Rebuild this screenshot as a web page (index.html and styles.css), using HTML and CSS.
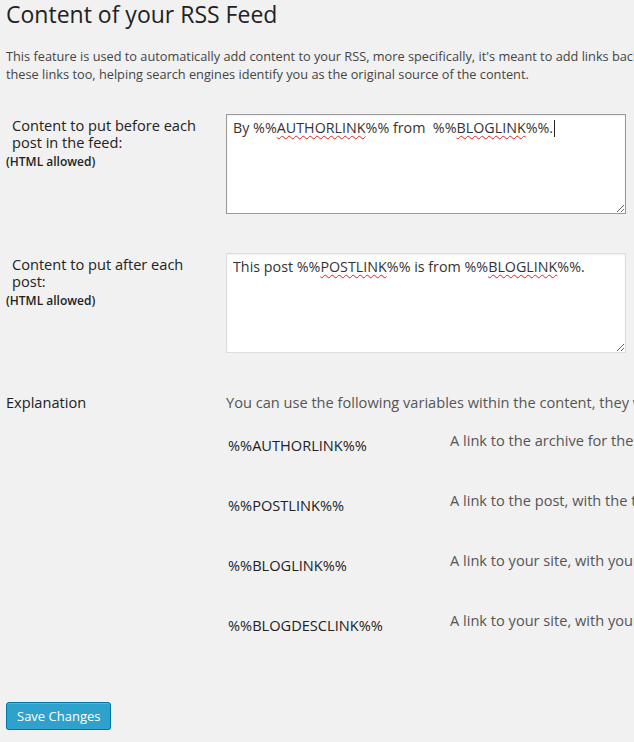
FILE: index.html
```html
<!DOCTYPE html>
<html lang="en">

<head>
    <meta charset="UTF-8">
    <meta name="viewport" content="width=device-width, initial-scale=1.0">
    <title>Content of your RSS Feed</title>
    <link rel="stylesheet" href="styles.css">
</head>

<body>
    <div class="wrap">
        <h2>Content of your RSS Feed</h2>
        <p class="intro">This feature is used to automatically add content to your RSS, more specifically, it's meant to add links back to your blog and your blog posts, so dumb scrapers will automatically add<br>these links too, helping search engines identify you as the original source of the content.</p>

        <form id="rssForm">
            <div class="form-row">
                <div class="label-cell">
                    <label for="rssbefore">Content to put before each post in the feed:</label>
                    <small>(HTML allowed)</small>
                </div>
                <div class="textbox focused" id="rssbefore" contenteditable="true" spellcheck="true">By %%<span class="typo">AUTHORLINK</span>%% from &nbsp;%%<span class="typo">BLOGLINK</span>%%.<span class="caret"></span></div>
            </div>

            <div class="form-row">
                <div class="label-cell">
                    <label for="rssafter">Content to put after each post:</label>
                    <small>(HTML allowed)</small>
                </div>
                <div class="textbox" id="rssafter" contenteditable="true" spellcheck="true">This post %%<span class="typo">POSTLINK</span>%% is from %%<span class="typo">BLOGLINK</span>%%.</div>
            </div>

            <div class="form-row explanation">
                <div class="label-cell">
                    <span class="plain-label">Explanation</span>
                </div>
                <div class="explain-cell">
                    <p>You can use the following variables within the content, they will automatically be replaced by the value below.</p>
                    <div class="vars">
                        <div class="var-row">
                            <span class="var-name">%%AUTHORLINK%%</span>
                            <span class="var-desc">A link to the archive for the post author, with the authors name as anchor text.</span>
                        </div>
                        <div class="var-row">
                            <span class="var-name">%%POSTLINK%%</span>
                            <span class="var-desc">A link to the post, with the title as anchor text.</span>
                        </div>
                        <div class="var-row">
                            <span class="var-name">%%BLOGLINK%%</span>
                            <span class="var-desc">A link to your site, with your site's name as anchor text.</span>
                        </div>
                        <div class="var-row">
                            <span class="var-name">%%BLOGDESCLINK%%</span>
                            <span class="var-desc">A link to your site, with your site's name and description as anchor text.</span>
                        </div>
                    </div>
                </div>
            </div>

            <button type="submit" class="button-primary">Save Changes</button>
        </form>
    </div>
</body>

</html>
```

FILE: styles.css
```css
:root {
    --bg: #f1f1f1;
    --text: #444444;
    --heading: #222222;
    --box-border: #dddddd;
    --box-focus: #999999;
    --primary: #2ea2cc;
    --primary-border: #0074a2;
}

html,
body {
    margin: 0;
    padding: 0;
    overflow: hidden;
    background-color: var(--bg);
}

body {
    font-family: "Open Sans", sans-serif;
    font-size: 13px;
    color: var(--text);
}

.wrap {
    width: 1000px;
    padding-left: 6px;
}

h2 {
    margin: 0;
    font-size: 23px;
    font-weight: 400;
    line-height: 29px;
    color: var(--heading);
}

.intro {
    margin: 18px 0 0;
    font-size: 12.75px;
    line-height: 18px;
    white-space: nowrap;
}

#rssForm {
    margin-top: 31px;
}

.form-row {
    display: grid;
    grid-template-columns: 220px 400px;
    margin-bottom: 39px;
}

.label-cell label {
    display: block;
    width: 194px;
    padding: 3px 0 0 6px;
    font-size: 14.6px;
    line-height: 17px;
    color: var(--heading);
}

.label-cell small {
    display: block;
    margin-top: 3px;
    font-size: 12px;
    font-weight: 600;
    line-height: 16px;
    color: var(--heading);
}

.textbox {
    box-sizing: border-box;
    height: 100px;
    padding: 3px 6px;
    background-color: #ffffff;
    border: 1px solid var(--box-border);
    box-shadow: inset 0 1px 2px rgba(0, 0, 0, 0.07);
    font-size: 14.3px;
    line-height: 19px;
    color: #333333;
    resize: both;
    overflow: auto;
    outline: none;
}

.textbox.focused {
    border-color: var(--box-focus);
}

.typo {
    text-decoration: underline wavy #e02020;
    text-decoration-thickness: 1px;
    text-underline-offset: 2px;
    text-decoration-skip-ink: none;
}

.caret {
    display: inline-block;
    width: 1px;
    height: 17px;
    margin-left: 1px;
    vertical-align: -4px;
    background-color: #222222;
}

.explanation {
    grid-template-columns: 220px 780px;
    margin-top: 41px;
    margin-bottom: 0;
}

.plain-label {
    display: block;
    font-size: 14.6px;
    line-height: 17px;
    color: var(--heading);
}

.explain-cell p {
    margin: 0;
    font-size: 14.6px;
    line-height: 17px;
    color: #555555;
    white-space: nowrap;
}

.vars {
    margin-top: 19px;
    padding-left: 2px;
}

.var-row {
    display: grid;
    grid-template-columns: 222px 1fr;
    height: 60px;
}

.var-name {
    padding-top: 5px;
    font-size: 14.6px;
    line-height: 20px;
    color: #222222;
}

.var-desc {
    font-size: 14.6px;
    line-height: 20px;
    color: #555555;
    white-space: nowrap;
}

.button-primary {
    display: block;
    height: 28px;
    margin-top: 32px;
    padding: 0 10px 1px;
    font-family: "Open Sans", sans-serif;
    font-size: 13px;
    line-height: 26px;
    color: #ffffff;
    background-color: var(--primary);
    border: 1px solid var(--primary-border);
    border-radius: 3px;
    box-shadow: inset 0 1px 0 rgba(120, 200, 230, 0.5), 0 1px 0 rgba(0, 0, 0, 0.15);
    cursor: pointer;
}
```
